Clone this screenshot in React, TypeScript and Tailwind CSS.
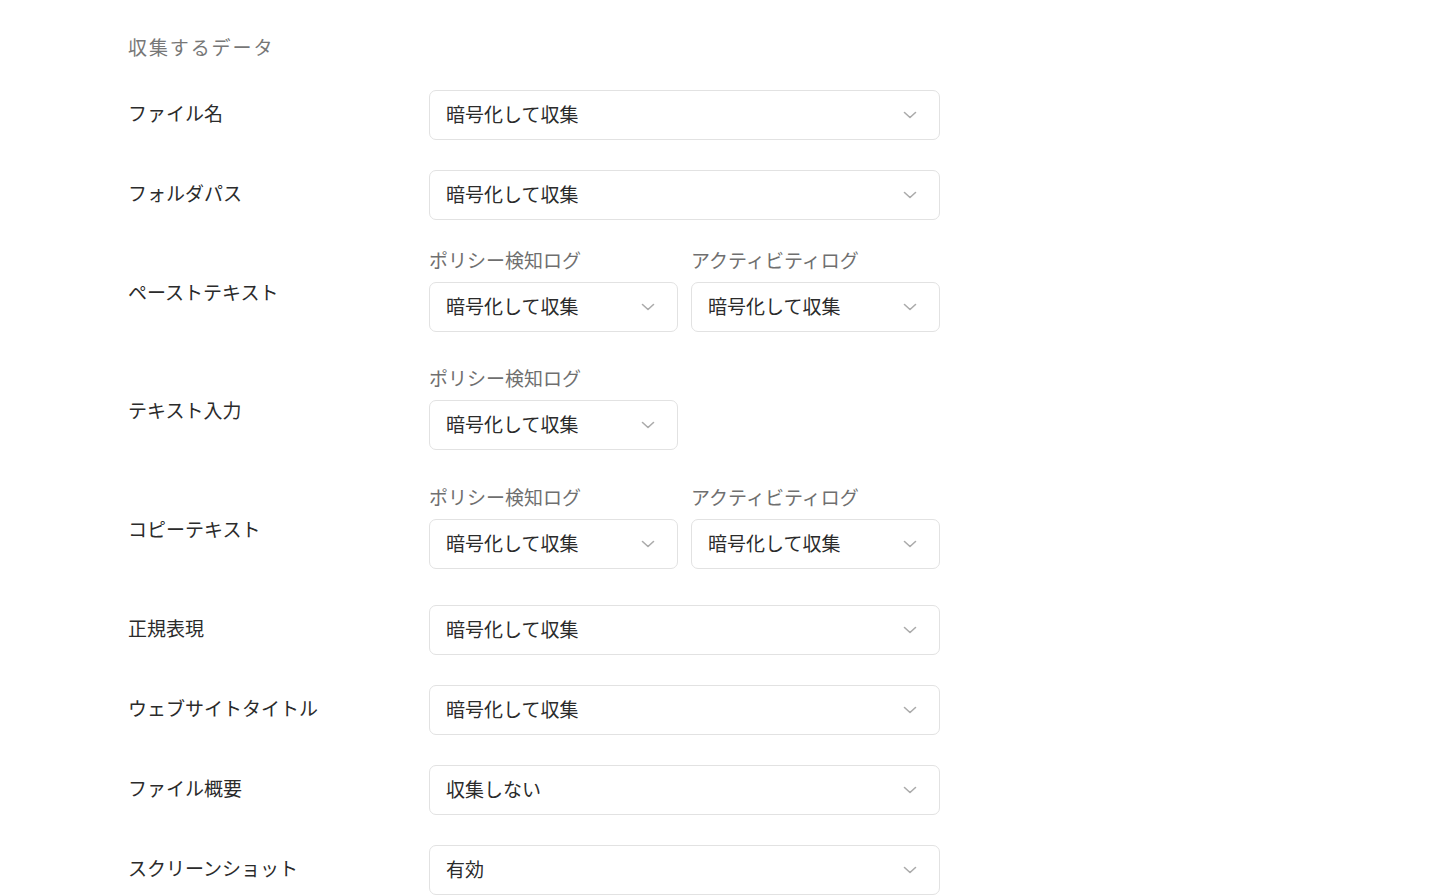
const FONT = { fontFamily: '"Noto Sans CJK JP", "Noto Sans", sans-serif' }

type Field = { sub?: string; value: string }

type Row = {
  label: string
  fields: Field[]
  mt: string
}

const ROWS: Row[] = [
  { label: 'ファイル名', fields: [{ value: '暗号化して収集' }], mt: 'mt-[32px]' },
  { label: 'フォルダパス', fields: [{ value: '暗号化して収集' }], mt: 'mt-[30px]' },
  {
    label: 'ペーストテキスト',
    fields: [
      { sub: 'ポリシー検知ログ', value: '暗号化して収集' },
      { sub: 'アクティビティログ', value: '暗号化して収集' },
    ],
    mt: 'mt-[30px]',
  },
  {
    label: 'テキスト入力',
    fields: [{ sub: 'ポリシー検知ログ', value: '暗号化して収集' }],
    mt: 'mt-[36px]',
  },
  {
    label: 'コピーテキスト',
    fields: [
      { sub: 'ポリシー検知ログ', value: '暗号化して収集' },
      { sub: 'アクティビティログ', value: '暗号化して収集' },
    ],
    mt: 'mt-[37px]',
  },
  { label: '正規表現', fields: [{ value: '暗号化して収集' }], mt: 'mt-[36px]' },
  { label: 'ウェブサイトタイトル', fields: [{ value: '暗号化して収集' }], mt: 'mt-[30px]' },
  { label: 'ファイル概要', fields: [{ value: '収集しない' }], mt: 'mt-[30px]' },
  { label: 'スクリーンショット', fields: [{ value: '有効' }], mt: 'mt-[30px]' },
]

function Chevron() {
  return (
    <svg width="14" height="8" viewBox="0 0 14 8" fill="none" className="shrink-0">
      <path d="M1.5 1.5 L7 6.5 L12.5 1.5" stroke="#ababab" strokeWidth="1.6" strokeLinecap="round" strokeLinejoin="round" />
    </svg>
  )
}

function Select({ value, wide }: { value: string; wide: boolean }) {
  return (
    <div
      className={`flex h-[50px] items-center justify-between rounded-[7px] border border-[#e2e2e2] bg-white pl-[16px] pr-[22px] ${
        wide ? 'w-[511px]' : 'w-[249px]'
      }`}
    >
      <span className="pb-[4px] text-[19px] leading-none text-[#2b2b2b]">{value}</span>
      <Chevron />
    </div>
  )
}

export default function App() {
  return (
    <div className="min-h-screen bg-white pl-[128px] pt-[36px]" style={FONT}>
      <h2 className="text-[19px] leading-[22px] tracking-[0.1em] text-[#777]">収集するデータ</h2>

      <div className="flex flex-col">
        {ROWS.map((row, i) => {
          const hasSub = row.fields.some(f => f.sub)
          return (
            <div key={i} className={`flex items-center ${row.mt}`}>
              <div
                className={`w-[301px] shrink-0 text-[19px] leading-[24px] text-[#2b2b2b] ${
                  hasSub ? 'pt-[1px]' : 'pb-[5px]'
                }`}
              >
                {row.label}
              </div>
              <div className="flex gap-[13px]">
                {row.fields.map((f, j) => (
                  <div key={j} className="flex flex-col">
                    {hasSub && (
                      <div className="mb-[10px] h-[22px] text-[19px] leading-[20px] text-[#6f6f6f]">{f.sub}</div>
                    )}
                    <Select value={f.value} wide={!hasSub} />
                  </div>
                ))}
              </div>
            </div>
          )
        })}
      </div>
    </div>
  )
}
